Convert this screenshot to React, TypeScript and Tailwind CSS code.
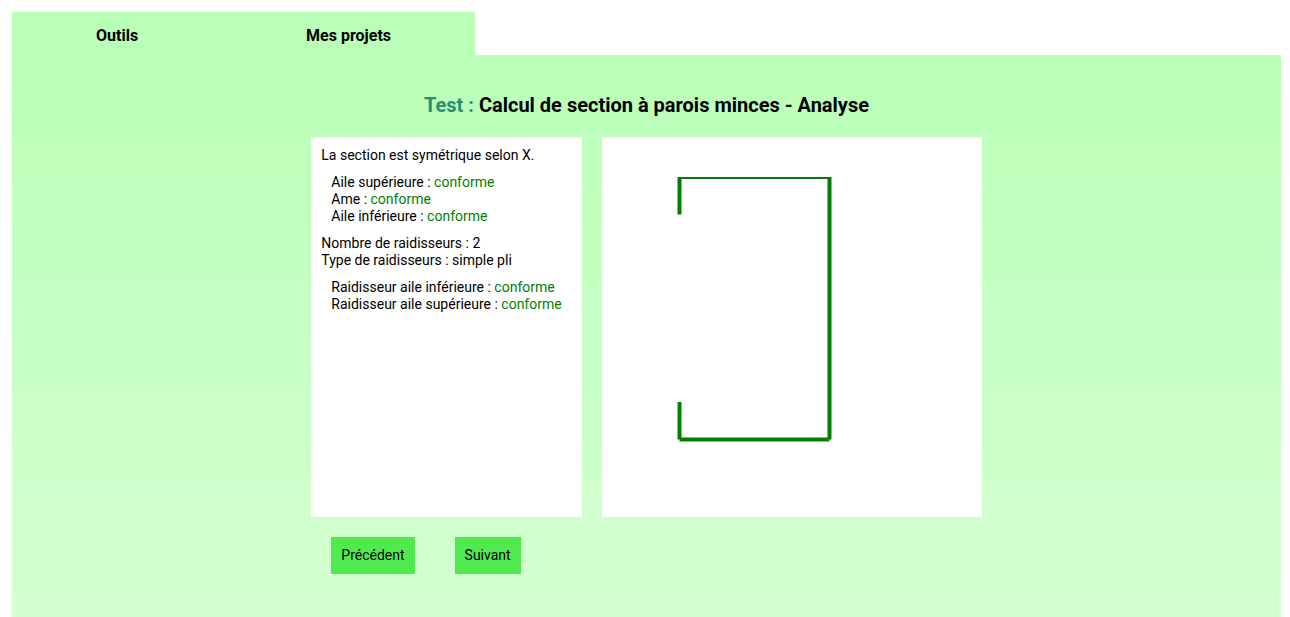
import type { ReactNode } from "react";

const tabs = ["Outils", "Mes projets"];

function Check({ label }: { label: string }) {
  return (
    <li>
      {label} : <span className="text-[#008000]">conforme</span>
    </li>
  );
}

function CheckList({ children }: { children: ReactNode }) {
  return <ul className="m-2.5">{children}</ul>;
}

function SectionDrawing() {
  return (
    <svg
      width="380"
      height="380"
      viewBox="0 0 380 380"
      className="shrink-0 bg-white"
      role="img"
      aria-label="Section"
    >
      <g stroke="#008000" strokeWidth="4">
        <line x1="77.5" y1="77.5" x2="77.5" y2="40" />
        <line x1="227.5" y1="40" x2="227.5" y2="302.5" />
        <line x1="227.5" y1="302.5" x2="77.5" y2="302.5" />
        <line x1="77.5" y1="302.5" x2="77.5" y2="265" />
      </g>
      <line x1="76" y1="41" x2="229" y2="41" stroke="#0d750d" strokeWidth="2" />
    </svg>
  );
}

export default function App() {
  return (
    <div className="flex min-h-screen flex-col bg-white pt-3 pr-[9px] pl-3 font-['Roboto',sans-serif] text-sm leading-[17px] text-black">
      <nav className="flex self-start bg-[#b9ffb7] text-base leading-[19px] font-bold">
        {tabs.map((tab) => (
          <a key={tab} href="#" className="px-[84px] pt-3.5 pb-2.5 text-center">
            {tab}
          </a>
        ))}
      </nav>
      <main className="flex grow flex-col items-center bg-linear-to-b from-[#b9ffb7] to-[#d4ffd2] px-5 pt-[38px] pb-[43px]">
        <h1 className="text-center text-xl leading-6 font-bold">
          <span className="text-[#2a8f72]">Test :</span> Calcul de section à parois minces - Analyse
        </h1>
        <div className="mt-5">
          <div className="flex gap-5">
            <section className="bg-white p-2.5">
              <p>La section est symétrique selon X.</p>
              <CheckList>
                <Check label="Aile supérieure" />
                <Check label="Ame" />
                <Check label="Aile inférieure" />
              </CheckList>
              <p>Nombre de raidisseurs : 2</p>
              <p>Type de raidisseurs : simple pli</p>
              <CheckList>
                <Check label="Raidisseur aile inférieure" />
                <Check label="Raidisseur aile supérieure" />
              </CheckList>
            </section>
            <SectionDrawing />
          </div>
          <div className="mt-5 ml-5 flex gap-10">
            <button type="button" className="cursor-pointer bg-[#50ea50] p-2.5">
              Précédent
            </button>
            <button type="button" className="cursor-pointer bg-[#50ea50] p-2.5">
              Suivant
            </button>
          </div>
        </div>
      </main>
    </div>
  );
}
